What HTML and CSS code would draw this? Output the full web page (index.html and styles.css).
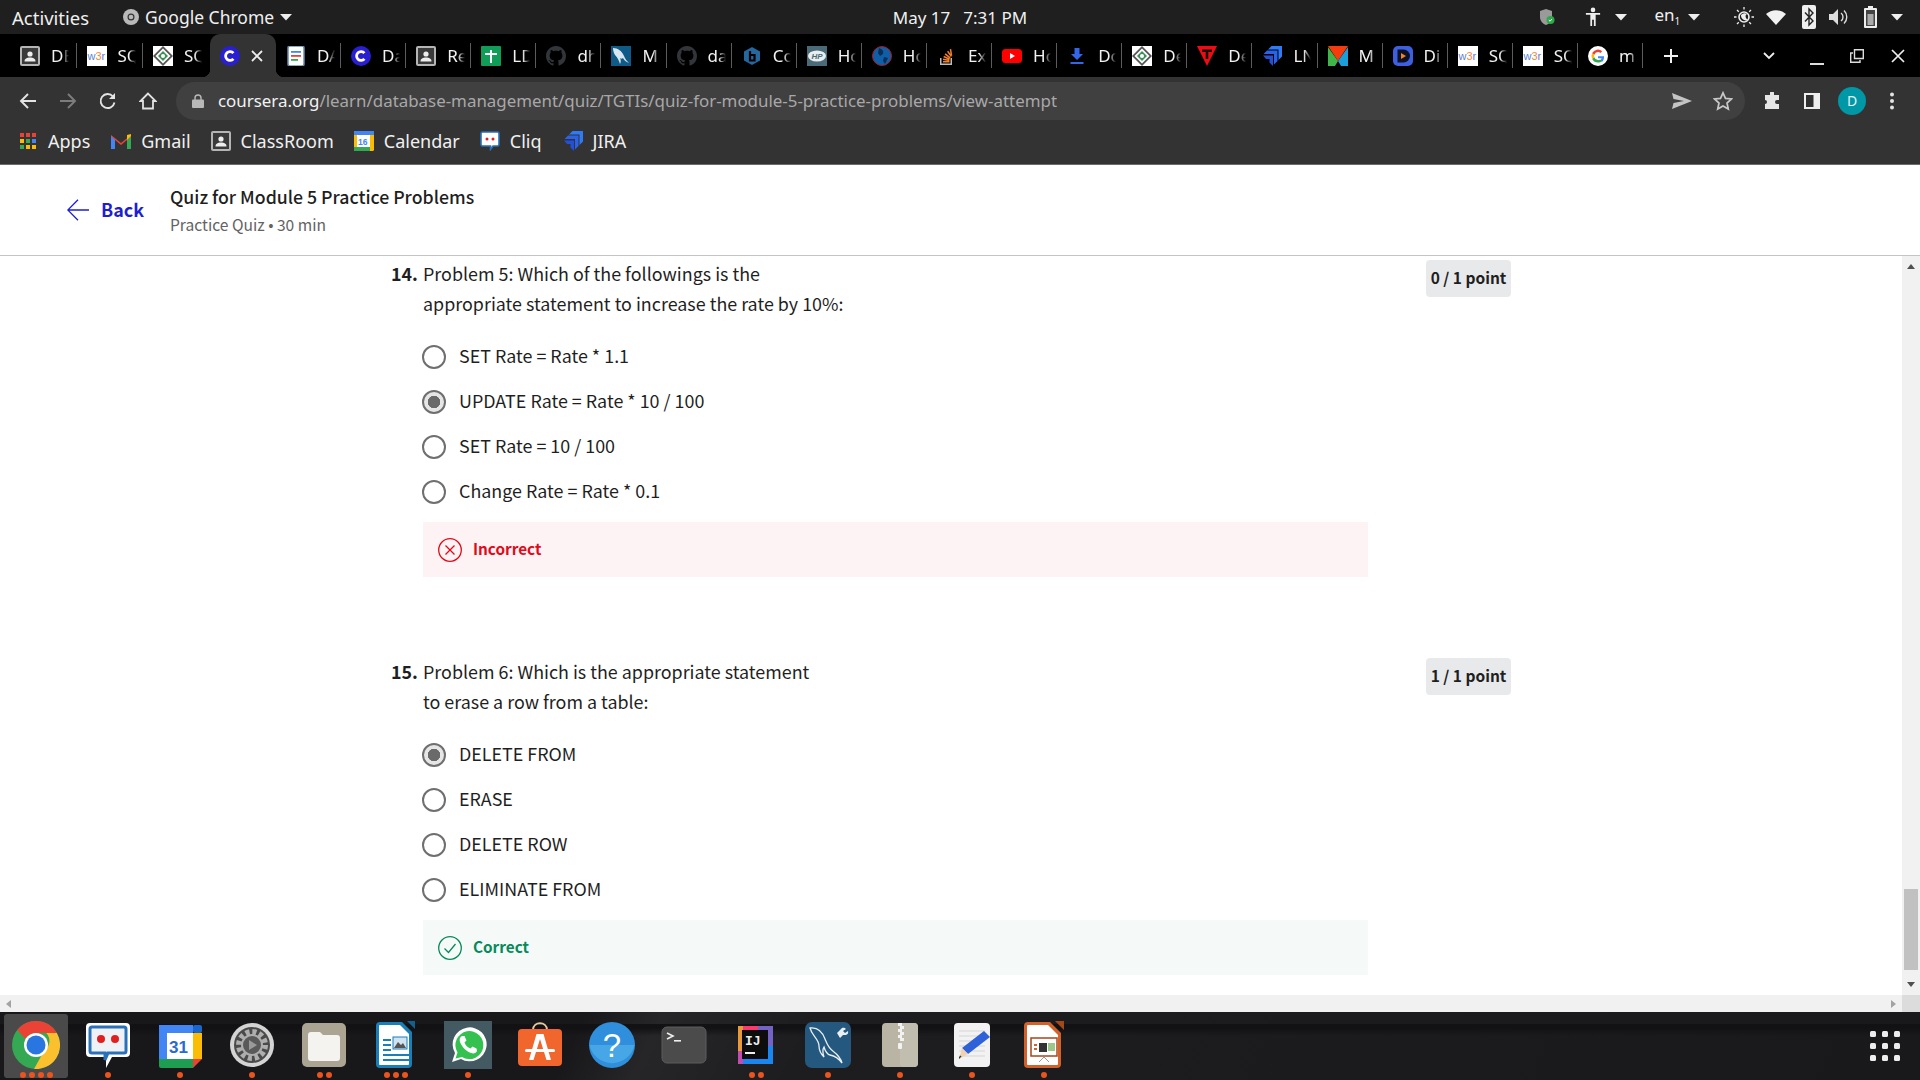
FILE: index.html
```html
<!DOCTYPE html>
<html lang="en">
<head>
    <meta charset="UTF-8">
    <title>Quiz for Module 5 Practice Problems</title>
    <link rel="stylesheet" href="styles.css">
</head>
<body>
<svg class="sprite" xmlns="http://www.w3.org/2000/svg">
    <symbol id="fav-classroom" viewBox="0 0 20 20"><rect width="20" height="20" rx="2" fill="#b5b5b5"/><rect x="2" y="2" width="16" height="16" fill="#3a3a3a"/><circle cx="10" cy="8" r="2.600" fill="#eee"/><path d="M4.500 15.500c0-3 2.500-4 5.500-4s5.500 1 5.500 4z" fill="#eee"/></symbol>
    <symbol id="fav-cert" viewBox="0 0 20 20"><rect width="20" height="20" fill="#fff"/><path d="M10 0l10 10-10 10L0 10z" fill="#555"/><path d="M10 2.500L17.500 10 10 17.500 2.500 10z" fill="#fff"/><path d="M10 5l5 5-5 5-5-5z" fill="#3e8e5a"/><circle cx="10" cy="10" r="2" fill="#fff"/></symbol>
    <symbol id="fav-coursera" viewBox="0 0 20 20"><circle cx="10" cy="10" r="10" fill="#2a1fd0"/><path d="M13.400 7.200a4.400 4.400 0 1 0 0 5.600" fill="none" stroke="#fff" stroke-width="2.800"/></symbol>
    <symbol id="fav-doc" viewBox="0 0 20 20"><rect x="2" y="0" width="16" height="20" rx="2" fill="#fff" stroke="#6a8db5" stroke-width="1.500"/><rect x="5" y="5" width="10" height="1.800" fill="#4285f4"/><rect x="5" y="9" width="10" height="1.800" fill="#ea4335"/><rect x="5" y="13" width="7" height="1.800" fill="#34a853"/></symbol>
    <symbol id="fav-plus" viewBox="0 0 20 20"><rect width="20" height="20" rx="1" fill="#0f9d58"/><path d="M9 4h2v3h5v2h-5v8H9V9H4V7h5z" fill="#fff"/></symbol>
    <symbol id="fav-github" viewBox="0 0 16 16"><path fill="#32363a" d="M8 0C3.580 0 0 3.580 0 8c0 3.540 2.290 6.530 5.470 7.590.4.070.55-.17.55-.38 0-.19-.01-.82-.01-1.490-2.010.37-2.530-.49-2.690-.94-.09-.23-.48-.94-.82-1.130-.28-.15-.68-.52-.01-.53.63-.01 1.080.58 1.230.82.72 1.210 1.870.87 2.330.66.07-.52.28-.87.51-1.070-1.780-.2-3.640-.89-3.640-3.950 0-.87.31-1.590.82-2.150-.08-.2-.36-1.020.08-2.120 0 0 .67-.21 2.200.82.64-.18 1.320-.27 2-.27.68 0 1.360.09 2 .27 1.530-1.040 2.200-.82 2.200-.82.44 1.100.16 1.920.08 2.120.51.56.82 1.270.82 2.150 0 3.070-1.870 3.750-3.650 3.950.29.25.54.73.54 1.480 0 1.070-.01 1.930-.01 2.200 0 .21.15.46.55.38A8.013 8.013 0 0 0 16 8c0-4.420-3.580-8-8-8z"/></symbol>
    <symbol id="fav-mysql" viewBox="0 0 20 20"><rect width="20" height="20" fill="#0f5a86"/><path d="M2 2c5 0 9 3 11 8 1 3 3 5 5 7-3-1-5-3-6-5-1 1-2 1-3 0 1 2 1 4 0 6-1-3-2-6-5-9C2.500 6.500 2 4 2 2z" fill="#d8e6ef"/></symbol>
    <symbol id="fav-hex" viewBox="0 0 20 20"><path d="M10 1l8 4.500v9L10 19l-8-4.500v-9z" fill="#24689f"/><path d="M8 5v9.500h4.500V9H8" fill="none" stroke="#000" stroke-width="2.200"/></symbol>
    <symbol id="fav-globe" viewBox="0 0 20 20"><circle cx="10" cy="10" r="9.500" fill="#0f5fa8" stroke="#a81b22" stroke-width="1"/><path d="M7 2c3 1 5 3 4 6l-3 2-2-3zM12 11l4 1-3 6-2-3z" fill="#0a2f55"/></symbol>
    <symbol id="fav-so" viewBox="0 0 20 20"><path d="M3 12v7h12v-7h-1.500v5.500h-9V12z" fill="#bcbbbb"/><path d="M6 15h6.500v1.500H6zM6.200 12.500l6.400 1.300-.3 1.500-6.400-1.300zM7 9.800l5.900 2.700-.6 1.400L6.400 11.200zM8.600 7.200l5 4.100-1 1.200-5-4.100zM11.200 4.800l3.800 5.200-1.200.9L10 5.700zM14.200 3l1.100 6.400-1.500.3L12.700 3.300z" fill="#f48024"/></symbol>
    <symbol id="fav-yt" viewBox="0 0 20 20"><rect y="3" width="20" height="14" rx="3.500" fill="#f00"/><path d="M8 7l5 3-5 3z" fill="#fff"/></symbol>
    <symbol id="fav-dl" viewBox="0 0 20 20"><path d="M7.500 2h5v6h3.500L10 14 4 8h3.500z" fill="#3367ea"/><rect x="3.500" y="16" width="13" height="2" fill="#3367ea"/></symbol>
    <symbol id="fav-t" viewBox="0 0 20 20"><path d="M0 0h20L10 20z" fill="#f00b13"/><path d="M5 3.500h10V6h-3.700v7H8.700V6H5z" fill="#111"/></symbol>
    <symbol id="fav-jira" viewBox="0 0 20 20"><path d="M9.500 0H20v10.500L16.500 14V3.500H6z" fill="#2f7bf5"/><path d="M5 4.500h10.500V15L12 18.500V8H1.500z" fill="#2a62ea"/><path d="M1 9.500h10V20l-3.500-3.500L7.500 13l-3.500 0z" fill="#2450d8"/></symbol>
    <symbol id="fav-m" viewBox="0 0 20 20"><path d="M0 0h20l-10 15z" fill="#f63c0c"/><path d="M0 1v19h7l3-5z" fill="#3fb54a"/><path d="M20 1v19h-7l-3-5z" fill="#1b9fdb"/></symbol>
    <symbol id="fav-dplay" viewBox="0 0 20 20"><rect width="20" height="20" rx="5" fill="#3d5fe0"/><path d="M4.500 3.500h6a6.500 6.500 0 0 1 0 13h-6z" fill="#0d1126"/><path d="M8 7l5 3-5 3z" fill="#f58220"/></symbol>
    <symbol id="fav-g" viewBox="0 0 20 20"><circle cx="10" cy="10" r="10" fill="#fff"/><path d="M16 10.200h-6v2.100h3.600a3.900 3.900 0 0 1-1.500 2l2 1.500c1.200-1.100 1.900-2.800 1.900-4.600z" fill="#4285f4"/><path d="M10 16.500c1.800 0 3.200-.6 4.100-1.600l-2-1.500c-.6.4-1.300.6-2.100.6a3.900 3.900 0 0 1-3.700-2.700l-2.100 1.600a6.500 6.500 0 0 0 5.800 3.600z" fill="#34a853"/><path d="M6.300 11.300a3.900 3.900 0 0 1 0-2.600L4.200 7.100a6.500 6.500 0 0 0 0 5.800z" fill="#fbbc05"/><path d="M10 6.100c.9 0 1.800.3 2.400.9l1.800-1.800A6.500 6.500 0 0 0 4.200 7.100l2.100 1.600A3.900 3.900 0 0 1 10 6.100z" fill="#ea4335"/></symbol>
    <symbol id="caret" viewBox="0 0 12 8"><path d="M0 1h12L6 7.500z" fill="#eee"/></symbol>
</svg>

<div class="desktop">
    <header class="topbar">
        <div class="topbar-left">
            <span class="activities">Activities</span>
            <span class="app-name">
                <svg class="app-icon" viewBox="0 0 16 16"><circle cx="8" cy="8" r="8" fill="#b9b9b9"/><circle cx="8" cy="8" r="3.500" fill="#333"/><circle cx="8" cy="8" r="2.300" fill="#b9b9b9"/></svg>
                Google Chrome
                <svg class="caret" viewBox="0 0 12 8"><use href="#caret"/></svg>
            </span>
        </div>
        <div class="clock"><span>May 17</span><span>7:31 PM</span></div>
        <div class="tray">
            <svg class="tray-shield" viewBox="0 0 16 18"><path d="M7 1l6 2v6c0 4-3 7-6 8-3-1-6-4-6-8V3z" fill="#9a9a9a"/><circle cx="11.500" cy="12" r="4" fill="#2eaa4a"/><path d="M9.800 12l1.200 1.200 2-2.200" fill="none" stroke="#fff"/></svg>
            <svg class="tray-person" viewBox="0 0 18 22"><circle cx="9" cy="3" r="2.600" fill="#eee"/><path d="M1 6.500h16v2h-5V21h-2v-7H8v7H6V8.500H1z" fill="#eee"/></svg>
            <svg class="caret tray-caret-a" viewBox="0 0 12 8"><use href="#caret"/></svg>
            <span class="tray-lang">en<sub>1</sub></span>
            <svg class="caret tray-caret-b" viewBox="0 0 12 8"><use href="#caret"/></svg>
            <svg class="tray-sun" viewBox="0 0 20 20"><circle cx="10" cy="10" r="5" fill="none" stroke="#eee" stroke-width="1.600"/><path d="M7 8a5 5 0 0 1 6-1c-2 1-2 4 1 6a5 5 0 0 1-7-5z" fill="#eee"/><path d="M10 0v2.500M10 17.500V20M0 10h2.500M17.500 10H20M3 3l1.800 1.800M15.200 15.200L17 17M3 17l1.800-1.800M15.200 4.800L17 3" stroke="#eee" stroke-width="1.300"/></svg>
            <svg class="tray-wifi" viewBox="0 0 20 16"><path d="M0 5a15 15 0 0 1 20 0L10 16z" fill="#f2f2f2"/></svg>
            <svg class="tray-bt" viewBox="0 0 14 24"><rect width="14" height="24" rx="2" fill="#eee"/><path d="M3 7.500l8 8.500-4 4V4l4 4-8 8.500" fill="none" stroke="#222" stroke-width="1.400"/></svg>
            <svg class="tray-vol" viewBox="0 0 20 18"><path d="M0 6h4l5-5v16l-5-5H0z" fill="#ddd"/><path d="M12 5a5 5 0 0 1 0 8M15 2.500a9 9 0 0 1 0 13" fill="none" stroke="#ddd" stroke-width="1.400"/></svg>
            <svg class="tray-battery" viewBox="0 0 13 22"><path d="M4 0h5v2h3a1 1 0 0 1 1 1v18a1 1 0 0 1-1 1H1a1 1 0 0 1-1-1V3a1 1 0 0 1 1-1h3z" fill="#eee"/><rect x="2" y="4" width="9" height="16" fill="#444"/><rect x="3.500" y="8" width="6" height="11" fill="#aaa"/></svg>
            <svg class="caret tray-caret-c" viewBox="0 0 12 8"><use href="#caret"/></svg>
        </div>
    </header>

    <div class="tabstrip">
        <div class="tab"><svg class="favicon"><use href="#fav-classroom"/></svg><span class="tab-title">DB</span></div>
        <div class="tab"><svg class="favicon" viewBox="0 0 20 20"><rect width="20" height="20" fill="#fff"/><text x="0.500" y="14" font-family="Liberation Sans, sans-serif" font-size="11"><tspan fill="#5b7fd6">w</tspan><tspan fill="#f0883e">3</tspan><tspan fill="#5b7fd6">r</tspan></text></svg><span class="tab-title">SQ</span></div>
        <div class="tab before-active"><svg class="favicon"><use href="#fav-cert"/></svg><span class="tab-title">SQ</span></div>
        <div class="tab active"><svg class="favicon"><use href="#fav-coursera"/></svg><svg class="tab-close" viewBox="0 0 12 12"><path d="M1 1l10 10M11 1L1 11" stroke="#eee" stroke-width="1.800"/></svg></div>
        <div class="tab"><svg class="favicon"><use href="#fav-doc"/></svg><span class="tab-title">DA</span></div>
        <div class="tab"><svg class="favicon"><use href="#fav-coursera"/></svg><span class="tab-title">Da</span></div>
        <div class="tab"><svg class="favicon"><use href="#fav-classroom"/></svg><span class="tab-title">Re</span></div>
        <div class="tab"><svg class="favicon"><use href="#fav-plus"/></svg><span class="tab-title">LD</span></div>
        <div class="tab"><svg class="favicon"><use href="#fav-github"/></svg><span class="tab-title">dh</span></div>
        <div class="tab"><svg class="favicon"><use href="#fav-mysql"/></svg><span class="tab-title">M</span></div>
        <div class="tab"><svg class="favicon"><use href="#fav-github"/></svg><span class="tab-title">da</span></div>
        <div class="tab"><svg class="favicon"><use href="#fav-hex"/></svg><span class="tab-title">Co</span></div>
        <div class="tab"><svg class="favicon" viewBox="0 0 20 20"><rect width="20" height="20" fill="#4a6a78"/><ellipse cx="10" cy="10" rx="9" ry="5.500" fill="#e8edf0"/><text x="4.500" y="13" font-family="Liberation Sans, sans-serif" font-size="8" font-style="italic" font-weight="700" fill="#4a6a78">HP</text></svg><span class="tab-title">Ho</span></div>
        <div class="tab"><svg class="favicon"><use href="#fav-globe"/></svg><span class="tab-title">Ho</span></div>
        <div class="tab"><svg class="favicon"><use href="#fav-so"/></svg><span class="tab-title">Ex</span></div>
        <div class="tab"><svg class="favicon"><use href="#fav-yt"/></svg><span class="tab-title">Ho</span></div>
        <div class="tab"><svg class="favicon"><use href="#fav-dl"/></svg><span class="tab-title">Do</span></div>
        <div class="tab"><svg class="favicon"><use href="#fav-cert"/></svg><span class="tab-title">De</span></div>
        <div class="tab"><svg class="favicon"><use href="#fav-t"/></svg><span class="tab-title">De</span></div>
        <div class="tab"><svg class="favicon"><use href="#fav-jira"/></svg><span class="tab-title">LN</span></div>
        <div class="tab"><svg class="favicon"><use href="#fav-m"/></svg><span class="tab-title">M</span></div>
        <div class="tab"><svg class="favicon"><use href="#fav-dplay"/></svg><span class="tab-title">Di</span></div>
        <div class="tab"><svg class="favicon" viewBox="0 0 20 20"><rect width="20" height="20" fill="#fff"/><text x="0.500" y="14" font-family="Liberation Sans, sans-serif" font-size="11"><tspan fill="#5b7fd6">w</tspan><tspan fill="#f0883e">3</tspan><tspan fill="#5b7fd6">r</tspan></text></svg><span class="tab-title">SQ</span></div>
        <div class="tab"><svg class="favicon" viewBox="0 0 20 20"><rect width="20" height="20" fill="#fff"/><text x="0.500" y="14" font-family="Liberation Sans, sans-serif" font-size="11"><tspan fill="#5b7fd6">w</tspan><tspan fill="#f0883e">3</tspan><tspan fill="#5b7fd6">r</tspan></text></svg><span class="tab-title">SQ</span></div>
        <div class="tab"><svg class="favicon"><use href="#fav-g"/></svg><span class="tab-title">m</span></div>
        <svg class="new-tab" viewBox="0 0 16 16"><path d="M7 1h2v6h6v2H9v6H7V9H1V7h6z" fill="#f0f0f0"/></svg>
        <svg class="tab-list" viewBox="0 0 12 8"><path d="M1 1l5 5 5-5" fill="none" stroke="#eee" stroke-width="1.800"/></svg>
        <svg class="win-min" viewBox="0 0 14 14"><rect y="11" width="14" height="2" fill="#ddd"/></svg>
        <svg class="win-max" viewBox="0 0 14 14"><path d="M4.500.7h8.800v8.800H4.500zM3 4H.7v9.300H10V11" fill="none" stroke="#ddd" stroke-width="1.400"/></svg>
        <svg class="win-close" viewBox="0 0 14 14"><path d="M1 1l12 12M13 1L1 13" stroke="#eee" stroke-width="1.700"/></svg>
    </div>

    <div class="toolbar">
        <div class="nav-btn"><svg viewBox="0 0 18 18"><path d="M17 9H2M9 2L2 9l7 7" fill="none" stroke="#e3e3e3" stroke-width="1.900"/></svg></div>
        <div class="nav-btn"><svg viewBox="0 0 18 18"><path d="M1 9h15M9 2l7 7-7 7" fill="none" stroke="#7d7d7d" stroke-width="1.900"/></svg></div>
        <div class="nav-btn"><svg viewBox="0 0 18 18"><path d="M15.500 10.500A7 7 0 1 1 14 4.500" fill="none" stroke="#e3e3e3" stroke-width="1.900"/><path d="M16 1v6h-6z" fill="#e3e3e3"/></svg></div>
        <div class="nav-btn"><svg viewBox="0 0 18 18"><path d="M9 1.500L1.500 9H4v7.500h10V9h2.500z" fill="none" stroke="#e3e3e3" stroke-width="1.800"/></svg></div>
        <div class="omnibox">
            <svg class="lock" viewBox="0 0 12 14"><path d="M3 6V4a3 3 0 0 1 6 0v2" fill="none" stroke="#b8b8b8" stroke-width="1.400"/><rect y="5.500" width="12" height="8.500" rx="1" fill="#b8b8b8"/></svg>
            <span class="url"><span class="url-host">coursera.org</span>/learn/database-management/quiz/TGTIs/quiz-for-module-5-practice-problems/view-attempt</span>
            <svg class="omni-send" viewBox="0 0 20 16"><path d="M0 0l20 8-20 8 1.500-6L12 8 1.500 6z" fill="#c4c4c4"/></svg>
            <svg class="omni-star" viewBox="0 0 20 20"><path d="M10 1.800l2.500 5.600 6 .6-4.500 4 1.300 6L10 15l-5.300 3 1.300-6-4.500-4 6-.6z" fill="none" stroke="#c8c8c8" stroke-width="1.700"/></svg>
        </div>
        <div class="nav-btn nav-first"><svg viewBox="0 0 18 18"><path d="M7 1a2 2 0 0 1 4 0v2h5v5h-2a2 2 0 0 0 0 4h2v5H2v-5a2 2 0 0 0 0-4V3h5z" fill="#e6e6e6"/></svg></div>
        <div class="nav-btn"><svg viewBox="0 0 18 18"><rect x="1" y="1" width="16" height="16" fill="#eee"/><rect x="3" y="3" width="7.500" height="12" fill="#2f2f2f"/></svg></div>
        <div class="avatar">D</div>
        <div class="nav-btn"><svg viewBox="0 0 4 18"><circle cx="2" cy="2.500" r="2" fill="#e3e3e3"/><circle cx="2" cy="9" r="2" fill="#e3e3e3"/><circle cx="2" cy="15.500" r="2" fill="#e3e3e3"/></svg></div>
    </div>

    <nav class="bookmarks">
        <a class="bookmark bm-apps"><svg viewBox="0 0 16 16"><rect width="4" height="4" fill="#ea4335"/><rect x="6" width="4" height="4" fill="#ea4335"/><rect x="12" width="4" height="4" fill="#ea4335"/><rect y="6" width="4" height="4" fill="#fbbc05"/><rect x="6" y="6" width="4" height="4" fill="#34a853"/><rect x="12" y="6" width="4" height="4" fill="#4285f4"/><rect y="12" width="4" height="4" fill="#34a853"/><rect x="6" y="12" width="4" height="4" fill="#fbbc05"/><rect x="12" y="12" width="4" height="4" fill="#fbbc05"/></svg>Apps</a>
        <a class="bookmark bm-gmail"><svg viewBox="0 0 20 16"><path d="M0 2l10 8 10-8v14h-4V7l-6 5-6-5v9H0z" fill="#ea4335"/><path d="M0 16V3l4 4v9z" fill="#4285f4"/><path d="M20 16V3l-4 4v9z" fill="#34a853"/><path d="M16 2l4-1v2l-4 4z" fill="#fbbc05"/></svg>Gmail</a>
        <a class="bookmark bm-class"><svg><use href="#fav-classroom"/></svg>ClassRoom</a>
        <a class="bookmark bm-cal"><svg viewBox="0 0 20 20"><rect width="20" height="20" rx="1.500" fill="#fbbc05"/><rect x="0" y="0" width="20" height="4" fill="#4285f4"/><rect x="0" y="16" width="16" height="4" fill="#34a853"/><rect x="3" y="4" width="13" height="12" fill="#fff"/><text x="4" y="14" font-family="Liberation Sans, sans-serif" font-size="8.500" font-weight="700" fill="#4285f4">16</text></svg>Calendar</a>
        <a class="bookmark bm-cliq"><svg viewBox="0 0 20 20"><path d="M2.500 1h15A1.500 1.500 0 0 1 19 2.500v11a1.500 1.500 0 0 1-1.500 1.500H13l-2.500 3.500V15h-8A1.500 1.500 0 0 1 1 13.500v-11A1.500 1.500 0 0 1 2.500 1z" fill="#fff" stroke="#2a70b8" stroke-width="1.600"/><circle cx="7" cy="8" r="1.500" fill="#e02020"/><circle cx="13" cy="8" r="1.500" fill="#e02020"/></svg>Cliq</a>
        <a class="bookmark bm-jira"><svg><use href="#fav-jira"/></svg>JIRA</a>
    </nav>

    <header class="quiz-header">
        <a class="back-link">
            <svg class="back-arrow" viewBox="0 0 22 22"><path d="M22 11H1M11 .7L.8 11 11 21.300" fill="none" stroke="#1f1fd0" stroke-width="1.300"/></svg>
            Back
        </a>
        <div class="quiz-title">
            <h1>Quiz for Module 5 Practice Problems</h1>
            <p>Practice Quiz • 30 min</p>
        </div>
    </header>

    <div class="viewport">
        <main class="content">
            <section class="question">
                <div class="question-head">
                    <span class="question-num">14.</span>
                    <p class="question-text">Problem 5: Which of the followings is the<br>appropriate statement to increase the rate by 10%:</p>
                    <span class="points">0 / 1 point</span>
                </div>
                <ul class="options">
                    <li class="option"><span class="radio"></span>SET Rate = Rate * 1.1</li>
                    <li class="option"><span class="radio checked"></span>UPDATE Rate = Rate * 10 / 100</li>
                    <li class="option"><span class="radio"></span>SET Rate = 10 / 100</li>
                    <li class="option"><span class="radio"></span>Change Rate = Rate * 0.1</li>
                </ul>
                <div class="feedback incorrect">
                    <svg viewBox="0 0 24 24"><circle cx="12" cy="12" r="11.300" fill="none" stroke="#e00a1b" stroke-width="1.300"/><path d="M7.500 7.500l9 9M16.500 7.500l-9 9" stroke="#e00a1b" stroke-width="1.300"/></svg>
                    Incorrect
                </div>
            </section>
            <section class="question">
                <div class="question-head">
                    <span class="question-num">15.</span>
                    <p class="question-text">Problem 6: Which is the appropriate statement<br>to erase a row from a table:</p>
                    <span class="points">1 / 1 point</span>
                </div>
                <ul class="options">
                    <li class="option"><span class="radio checked"></span>DELETE FROM</li>
                    <li class="option"><span class="radio"></span>ERASE</li>
                    <li class="option"><span class="radio"></span>DELETE ROW</li>
                    <li class="option"><span class="radio"></span>ELIMINATE FROM</li>
                </ul>
                <div class="feedback correct">
                    <svg viewBox="0 0 24 24"><circle cx="12" cy="12" r="11.300" fill="none" stroke="#068a5a" stroke-width="1.300"/><path d="M6.500 12.500l4 4 7-8.500" fill="none" stroke="#068a5a" stroke-width="1.300"/></svg>
                    Correct
                </div>
            </section>
        </main>
        <div class="vscroll">
            <svg class="scroll-arrow" viewBox="0 0 8 5"><path d="M0 5h8L4 0z" fill="#505050"/></svg>
            <div class="vthumb"></div>
            <svg class="scroll-arrow" viewBox="0 0 8 5"><path d="M0 0h8L4 5z" fill="#505050"/></svg>
        </div>
    </div>
    <div class="hscroll">
        <svg class="harrow" viewBox="0 0 5 8"><path d="M5 0v8L0 4z" fill="#a3a3a3"/></svg>
        <svg class="harrow" viewBox="0 0 5 8"><path d="M0 0v8l5-4z" fill="#a3a3a3"/></svg>
        <div class="hcorner"></div>
    </div>

    <footer class="dock">
        <div class="dock-item active">
            <svg viewBox="0 0 48 48"><circle cx="24" cy="24" r="24" fill="#34a853"/><path d="M24 0a24 24 0 0 1 20.800 12H24a12 12 0 0 0-10.400 6L5.200 9A24 24 0 0 1 24 0z" fill="#ea4335"/><path d="M44.800 12A24 24 0 0 1 22 48l10-18a12 12 0 0 0 2.400-18z" fill="#fbc02d"/><circle cx="24" cy="24" r="12" fill="#fff"/><circle cx="24" cy="24" r="9.500" fill="#2a76e0"/></svg>
            <div class="dots"><i></i><i></i><i></i><i></i></div>
        </div>
        <div class="dock-item">
            <svg viewBox="0 0 48 48"><path d="M6 2h36a4 4 0 0 1 4 4v26a4 4 0 0 1-4 4H28l-6 11v-11H6a4 4 0 0 1-4-4V6a4 4 0 0 1 4-4z" fill="#fff"/><path d="M8 6h32a2 2 0 0 1 2 2v22a2 2 0 0 1-2 2H24l-3 7v-7H8a2 2 0 0 1-2-2V8a2 2 0 0 1 2-2z" fill="#eef2f6" stroke="#2a70b8" stroke-width="3"/><circle cx="17" cy="18" r="4" fill="#e02020"/><circle cx="31" cy="18" r="4" fill="#e02020"/></svg>
            <div class="dots"><i></i></div>
        </div>
        <div class="dock-item">
            <svg viewBox="0 0 48 48"><path d="M3 4h34v8H11v26H3z" fill="#4285f4"/><rect x="37" y="4" width="9" height="8" rx="2" fill="#1a66d0"/><rect x="37" y="12" width="9" height="26" fill="#fbbc05"/><path d="M3 38h34v9H5a2 2 0 0 1-2-2z" fill="#1e9e50"/><path d="M37 38h9l-9 9z" fill="#ea4335"/><rect x="11" y="12" width="26" height="26" fill="#fff"/><text x="13" y="32" font-family="Liberation Sans, sans-serif" font-size="17" font-weight="700" fill="#2a6ad0">31</text></svg>
            <div class="dots"><i></i></div>
        </div>
        <div class="dock-item">
            <svg viewBox="0 0 48 48"><circle cx="24" cy="24" r="22" fill="#d4d4d4"/><circle cx="24" cy="24" r="18" fill="#4a4a4a"/><circle cx="24" cy="24" r="13" fill="none" stroke="#aeaeae" stroke-width="6" stroke-dasharray="4 2.800"/><circle cx="24" cy="24" r="10" fill="#5a5a5a" stroke="#aeaeae" stroke-width="2"/><path d="M21 19l8 5-8 5z" fill="#9a9a9a"/></svg>
            <div class="dots"><i></i></div>
        </div>
        <div class="dock-item">
            <svg viewBox="0 0 48 48"><rect x="2" y="2" width="44" height="44" rx="5" fill="#aba492"/><path d="M8 14a3 3 0 0 1 3-3h9l3 3h14a3 3 0 0 1 3 3v20a3 3 0 0 1-3 3H11a3 3 0 0 1-3-3z" fill="#f4f3ef"/></svg>
            <div class="dots"><i></i><i></i></div>
        </div>
        <div class="dock-item">
            <svg viewBox="0 0 48 48"><path d="M8 1h22l5 5 5 5v32a4 4 0 0 1-4 4H8a4 4 0 0 1-4-4V5a4 4 0 0 1 4-4z" fill="#1a7fb8"/><path d="M8 4h20l9 9v30a1 1 0 0 1-1 1H8a1 1 0 0 1-1-1V5a1 1 0 0 1 1-1z" fill="#fff"/><path d="M33 0h8v8z" fill="#14608c" transform="translate(2 0)"/><rect x="11" y="18" width="8" height="2" fill="#1a7fb8"/><rect x="11" y="23" width="8" height="2" fill="#1a7fb8"/><rect x="11" y="28" width="8" height="2" fill="#1a7fb8"/><rect x="21" y="16" width="14" height="12" fill="#cfe3f0" stroke="#1a7fb8"/><path d="M22 27l4-6 3 3 2-2 3 5z" fill="#555"/><rect x="11" y="33" width="26" height="2" fill="#1a7fb8"/><rect x="11" y="38" width="26" height="2" fill="#1a7fb8"/></svg>
            <div class="dots"><i></i><i></i><i></i></div>
        </div>
        <div class="dock-item whatsapp">
            <svg viewBox="0 0 48 48"><rect width="48" height="48" fill="#445a63"/><path d="M8 41l3-9a17 17 0 1 1 6 6z" fill="#fff"/><path d="M11.500 37.500l2-6a14 14 0 1 1 4.500 4.500z" fill="#35c14f"/><path d="M18 15c-2 1-3 3-2 6 2 5 6 9 11 11 3 1 5 0 6-2l-.5-2.500-4-2-2 2c-3-1-5-3-6-6l2-2-2-4.500z" fill="#fff"/></svg>
            <div class="dots"><i></i></div>
        </div>
        <div class="dock-item">
            <svg viewBox="0 0 48 48"><path d="M17 9c0-9 14-9 14 0" fill="none" stroke="#e6c8a0" stroke-width="2"/><rect x="2" y="8" width="44" height="37" rx="4" fill="#f0662c"/><path d="M20.500 13h7l7.500 26h-4.500l-6.500-21-6.500 21H13z" fill="#fff"/><rect x="9" y="28" width="30" height="3" rx="1.500" fill="#fff"/></svg>
            <div class="dots"></div>
        </div>
        <div class="dock-item">
            <svg viewBox="0 0 48 48"><circle cx="24" cy="24" r="23" fill="#2f8fdc"/><path d="M1.500 24a23 23 0 0 0 45 0z" fill="#46a6e6"/><text x="24" y="36" text-anchor="middle" font-family="Liberation Sans, sans-serif" font-size="33" fill="#fff">?</text></svg>
            <div class="dots"></div>
        </div>
        <div class="dock-item">
            <svg viewBox="0 0 48 48"><rect x="2" y="6" width="44" height="36" rx="5" fill="#4b4b4b" stroke="#5c5c5c"/><path d="M7 12l6 3-6 3" fill="none" stroke="#eee" stroke-width="1.600"/><rect x="14" y="19" width="7" height="1.600" fill="#eee"/></svg>
            <div class="dots"></div>
        </div>
        <div class="dock-item">
            <svg viewBox="0 0 48 48"><path d="M6 5h20v5H6z" fill="#fc3a6d"/><path d="M26 5h15v20h-5V10H26z" fill="#7462c4"/><path d="M6 5h5v38H6z" fill="#e89a3a"/><path d="M6 30h5v13h20v-0H6z" fill="#c04eb0"/><path d="M11 43h30V25h-5v13H11z" fill="#1a87f0"/><rect x="10" y="9" width="26" height="29" fill="#0d0d0d"/><text x="13" y="24" font-family="Liberation Mono, monospace" font-size="13" font-weight="700" fill="#eee">IJ</text><rect x="13" y="31" width="10" height="2" fill="#eee"/></svg>
            <div class="dots"><i></i><i></i></div>
        </div>
        <div class="dock-item">
            <svg viewBox="0 0 48 48"><rect x="1" y="1" width="46" height="46" rx="7" fill="#24587f"/><path d="M6 7c7-1 12 3 15 11 2 5 3 9 9 13 3 2 7 7 8 11-3-4-7-7-12-8-2 0-5-4-6-8-2 3-1 7 0 10-3-3-5-7-5-11 0-7-7-10-9-18z" fill="none" stroke="#e8f0f5" stroke-width="1.300"/><path d="M33 12l5-5c2-.5 3 0 4 1l-3 2 2 2 3-2c.500 2 0 3-2 4l-3 0-3 3z" fill="#e8f0f5"/></svg>
            <div class="dots"><i></i></div>
        </div>
        <div class="dock-item">
            <svg viewBox="0 0 48 48"><rect x="6" y="2" width="36" height="44" rx="4" fill="#b9b4a4"/><rect x="24" y="2" width="18" height="44" rx="4" fill="#c2beaf"/><path d="M22 2h4v3h-4zM24 5h4v3h-4zM22 8h4v3h-4zM24 11h4v3h-4zM22 14h4v3h-4zM24 17h4v3h-4z" fill="#f2f2f2"/><rect x="22" y="22" width="4" height="6" rx="1" fill="#f2f2f2"/></svg>
            <div class="dots"><i></i></div>
        </div>
        <div class="dock-item">
            <svg viewBox="0 0 48 48"><rect x="6" y="2" width="36" height="44" rx="4" fill="#f2f2f2"/><path d="M11 10h26M11 15h26M11 20h26M11 25h26M11 30h26M11 35h26" stroke="#d5d5d5"/><path d="M36 10l6 6-22 17-6-6z" fill="#2f62d8"/><path d="M14 27l6 6-9 5z" fill="#f0d2b0"/><path d="M11 36l1.500-1.500 1 1L11 38z" fill="#333"/></svg>
            <div class="dots"><i></i></div>
        </div>
        <div class="dock-item">
            <svg viewBox="0 0 48 48"><path d="M8 1h22l6 6 5 5v31a4 4 0 0 1-4 4H8a4 4 0 0 1-4-4V5a4 4 0 0 1 4-4z" fill="#d2622a"/><path d="M8 4h20l10 10v29a1 1 0 0 1-1 1H8a1 1 0 0 1-1-1V5a1 1 0 0 1 1-1z" fill="#fff"/><path d="M35 0h9v9z" fill="#a3481a"/><rect x="11" y="17" width="26" height="18" fill="#fff" stroke="#a8461a" stroke-width="1.500"/><rect x="14" y="23" width="3" height="2" fill="#d2622a"/><rect x="14" y="27" width="3" height="2" fill="#d2622a"/><rect x="19" y="22" width="8" height="9" fill="#333"/><rect x="28" y="22" width="7" height="8" fill="#9ec88a"/><path d="M19 41l5-5 5 5" fill="none" stroke="#999"/></svg>
            <div class="dots"><i></i></div>
        </div>
        <div class="show-apps">
            <i></i><i></i><i></i><i></i><i></i><i></i><i></i><i></i><i></i>
        </div>
    </footer>
</div>
</body>
</html>
```
FILE: styles.css
```css
*{
    margin: 0;
    padding: 0;
    box-sizing: border-box;
}
li{
    list-style: none;
}
body{
    width: 1920px;
    height: 1080px;
    overflow: hidden;
    background: #fff;
    font-family: "Noto Sans", "Liberation Sans", sans-serif;
}
svg{
    display: block;
    flex: none;
}
.sprite{
    position: absolute;
    width: 0;
    height: 0;
}
.desktop{
    display: flex;
    flex-direction: column;
    height: 1080px;
}

/* top bar */
.topbar{
    height: 34px;
    flex: none;
    display: grid;
    grid-template-columns: 1fr auto 1fr;
    align-items: center;
    background: #1f1f1f;
    color: #f0f0f0;
    font-size: 17.500px;
}
.topbar-left{
    display: flex;
    align-items: center;
    padding-left: 12px;
}
.activities{
    width: 111px;
    font-size: 18.500px;
}
.app-name{
    display: flex;
    align-items: center;
    gap: 6px;
}
.app-icon{
    width: 16px;
    height: 16px;
}
.caret{
    width: 12px;
    height: 8px;
}
.clock{
    display: flex;
    gap: 13px;
    font-size: 17px;
}
.tray{
    display: flex;
    align-items: center;
    justify-content: flex-end;
    padding-right: 17px;
}
.tray-shield{ width: 16px; height: 18px; margin-right: 1px; }
.tray-person{ width: 16px; height: 20px; margin-left: 29px; }
.tray-caret-a{ margin-left: 14px; }
.tray-lang{ width: 28px; margin-left: 28px; font-size: 17px; line-height: 20px; padding-top: 3px; }
.tray-lang sub{ font-size: 10px; }
.tray-caret-b{ margin-left: 5px; }
.tray-sun{ width: 20px; height: 20px; margin-left: 34px; }
.tray-wifi{ width: 20px; height: 16px; margin-left: 12px; }
.tray-bt{ width: 14px; height: 24px; margin-left: 16px; }
.tray-vol{ width: 20px; height: 18px; margin-left: 13.500px; }
.tray-battery{ width: 13px; height: 22px; margin-left: 15px; }
.tray-caret-c{ margin-left: 14px; }

/* tabs */
.tabstrip{
    height: 43px;
    flex: none;
    display: flex;
    align-items: stretch;
    padding-left: 10px;
    background: #000;
    color: #f2f2f2;
    font-size: 17px;
}
.tab{
    width: 65.100px;
    flex: none;
    display: flex;
    align-items: center;
    padding-left: 10px;
    position: relative;
}
.tab:nth-child(-n+4){
    width: 66.500px;
}
.tab::after{
    content: "";
    width: 1px;
    height: 25px;
    margin-left: auto;
    background: #5c5c5c;
}
.favicon{
    width: 20px;
    height: 20px;
    flex: none;
}
.tab-title{
    width: 18px;
    margin-left: 11px;
    overflow: hidden;
    white-space: nowrap;
    -webkit-mask-image: linear-gradient(90deg, #000 60%, transparent);
    mask-image: linear-gradient(90deg, #000 60%, transparent);
}
.tab.before-active::after{
    background: transparent;
}
.tab.active{
    background: #333;
    border-radius: 10px 10px 0 0;
}
.tab.active::after{
    position: absolute;
    left: -8px;
    bottom: 0;
    width: 8px;
    height: 8px;
    background: radial-gradient(circle at 0 0, #000 8px, #333 8.500px);
}
.tab.active::before{
    content: "";
    position: absolute;
    right: -8px;
    bottom: 0;
    width: 8px;
    height: 8px;
    background: radial-gradient(circle at 100% 0, #000 8px, #333 8.500px);
}
.tab-close{
    width: 12px;
    height: 12px;
    margin-left: 11px;
}
.new-tab{
    width: 16px;
    height: 16px;
    align-self: center;
    margin-left: 20px;
}
.tab-list{
    width: 12px;
    height: 8px;
    align-self: center;
    margin-left: 84px;
}
.win-min{
    width: 14px;
    height: 14px;
    align-self: center;
    margin: 6px 0 0 35px;
}
.win-max{
    width: 14px;
    height: 14px;
    align-self: center;
    margin-left: 26px;
}
.win-close{
    width: 14px;
    height: 14px;
    align-self: center;
    margin-left: 27px;
}

/* address bar */
.toolbar{
    height: 45px;
    flex: none;
    display: flex;
    align-items: flex-start;
    padding: 5px 0 0 8px;
    background: #333;
}
.nav-btn{
    width: 40px;
    height: 38px;
    flex: none;
    display: flex;
    align-items: center;
    justify-content: center;
}
.nav-btn svg{
    height: 18px;
    width: auto;
}
.nav-first{
    margin-left: 7px;
}
.omnibox{
    width: 1569px;
    height: 38px;
    margin-left: 8px;
    display: flex;
    align-items: center;
    padding-left: 16px;
    border-radius: 19px;
    background: #404040;
}
.lock{
    width: 12px;
    height: 14px;
}
.url{
    width: 1441px;
    margin: -2px 0 0 14px;
    color: #a8a8a8;
    font-size: 16.900px;
    white-space: nowrap;
}
.url-host{
    color: #f2f2f2;
}
.omni-send{
    width: 20px;
    height: 16px;
    margin-left: 13px;
}
.omni-star{
    width: 20px;
    height: 20px;
    margin-left: 21px;
}
.avatar{
    width: 28px;
    height: 28px;
    flex: none;
    margin: 5px 6px 0;
    border-radius: 50%;
    background: #0097a7;
    color: #e8f5f7;
    font-size: 14px;
    line-height: 28px;
    text-align: center;
}

/* bookmarks */
.bookmarks{
    height: 43px;
    flex: none;
    display: flex;
    align-items: center;
    padding: 0 0 4px 20px;
    background: #333;
    border-bottom: 1px solid #6b6b6b;
    color: #f0f0f0;
    font-size: 18px;
}
.bookmark{
    display: flex;
    align-items: center;
}
.bookmark svg{
    width: 20px;
    height: 20px;
    margin-right: 10px;
}
.bm-apps svg{
    width: 16px;
    height: 16px;
    margin-right: 12px;
}
.bm-gmail{ margin-left: 21px; }
.bm-class{ margin-left: 20px; }
.bm-cal{ margin-left: 20px; }
.bm-cliq{ margin-left: 20px; }
.bm-jira{ margin-left: 21px; }

/* quiz header */
.quiz-header{
    height: 91px;
    flex: none;
    display: flex;
    align-items: center;
    padding-left: 67px;
    border-bottom: 1px solid #c4c4c4;
    color: #1f1f1f;
    font-family: "Noto Sans CJK JP", "Liberation Sans", sans-serif;
}
.back-link{
    display: flex;
    align-items: center;
    width: 103px;
    margin-top: -2px;
    color: #1f1fd0;
    font-size: 17.900px;
    font-weight: 700;
}
.back-arrow{
    width: 22px;
    height: 22px;
    margin: 2px 12px 0 0;
}
.quiz-title{
    margin-top: -2px;
}
.quiz-title h1{
    font-size: 17.700px;
    line-height: 26px;
    font-weight: 500;
    margin-bottom: 3px;
}
.quiz-title p{
    font-size: 15.600px;
    line-height: 24px;
    color: #636363;
}

/* questions */
.viewport{
    flex: 1;
    min-height: 0;
    display: flex;
}
.content{
    flex: 1;
    overflow: hidden;
    padding: 4px 0 0 391px;
    color: #1f1f1f;
    font-family: "Noto Sans CJK JP", "Liberation Sans", sans-serif;
    font-size: 17.900px;
}
.question{
    width: 1120px;
    margin-bottom: 81px;
}
.question-head{
    display: flex;
    align-items: flex-start;
    height: 60px;
    line-height: 30px;
}
.question-num,
.question-text{
    margin-top: -2px;
}
.question-num{
    width: 32px;
    flex: none;
    font-weight: 700;
}
.question-text{
    flex: 1;
}
.points{
    width: 85px;
    height: 37px;
    border-radius: 4px;
    background: #e8e9ea;
    font-size: 15.500px;
    font-weight: 700;
    line-height: 35px;
    text-align: center;
}
.options{
    margin: 14px 0 8px 31px;
}
.option{
    height: 45px;
    display: flex;
    align-items: center;
    padding-bottom: 3px;
}
.radio{
    width: 24px;
    height: 24px;
    flex: none;
    margin: 3px 13px 0 0;
    border: 2.500px solid #6f6f6f;
    border-radius: 50%;
    background: #fff;
}
.radio.checked{
    background: radial-gradient(circle, #6a6a6a 6px, #e6e6e6 6.500px);
}
.feedback{
    width: 945px;
    height: 55px;
    margin-left: 32px;
    display: flex;
    align-items: center;
    gap: 11px;
    padding: 0 0 3px 15px;
    font-size: 15.300px;
    font-weight: 700;
}
.feedback svg{
    width: 24px;
    height: 24px;
    margin-top: 3px;
}
.incorrect{
    background: #fdf3f4;
    color: #e00a1b;
}
.correct{
    background: #f5faf8;
    color: #068a5a;
}

/* scrollbars */
.vscroll{
    width: 18px;
    flex: none;
    display: flex;
    flex-direction: column;
    align-items: center;
    padding: 8px 0;
    background: #f1f1f1;
}
.scroll-arrow{
    width: 8px;
    height: 5px;
}
.vthumb{
    width: 14px;
    height: 81px;
    margin: auto 0 12px;
    background: #c1c1c1;
}
.hscroll{
    height: 17px;
    flex: none;
    display: flex;
    align-items: center;
    justify-content: space-between;
    padding-left: 6px;
    background: #f1f1f1;
}
.harrow{
    width: 5px;
    height: 8px;
}
.harrow + .harrow{
    margin-left: auto;
    margin-right: 6px;
}
.hcorner{
    width: 18px;
    height: 17px;
    background: #dcdcdc;
}

/* dock */
.dock{
    height: 68px;
    flex: none;
    display: flex;
    background:
        linear-gradient(180deg, transparent 12px, #121214 12px, #121214 16px, transparent 24px),
        linear-gradient(115deg, #18181a 30%, #262628 34%, #1d1d1f 42%, #19191b 100%);
}
.dock-item{
    width: 72px;
    flex: none;
    display: flex;
    flex-direction: column;
    align-items: center;
    padding-top: 9px;
    position: relative;
}
.dock-item svg{
    width: 48px;
    height: 48px;
}
.dock-item.active::before{
    content: "";
    position: absolute;
    left: 4px;
    top: 2px;
    width: 64px;
    height: 64px;
    border-radius: 3px;
    background: #4a4a4a;
}
.dock-item.active svg,
.dock-item.active .dots{
    position: relative;
}
.dots{
    height: 6px;
    margin-top: 3px;
    display: flex;
    gap: 3px;
}
.dots i{
    width: 6px;
    height: 6px;
    border-radius: 50%;
    background: #e95420;
}
.show-apps{
    margin: 19px 21px 0 auto;
    width: 29px;
    height: 29px;
    display: grid;
    grid-template-columns: repeat(3, 6px);
    grid-auto-rows: 6px;
    gap: 6px;
}
.show-apps i{
    border-radius: 1.500px;
    background: #eee;
}
```
